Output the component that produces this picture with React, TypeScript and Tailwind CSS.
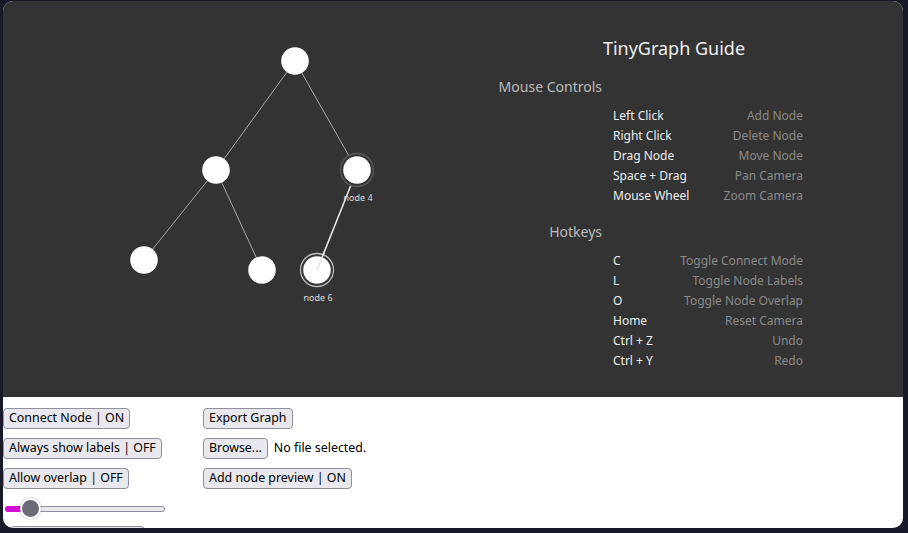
import React from 'react';

type Node = { id: number; x: number; y: number; label?: string; ring?: 'dim' | 'bright' };

const nodes: Node[] = [
  { id: 1, x: 292, y: 60 },
  { id: 2, x: 213, y: 169 },
  { id: 4, x: 354, y: 169, label: 'node 4', ring: 'dim' },
  { id: 3, x: 141, y: 259 },
  { id: 5, x: 259, y: 269 },
  { id: 6, x: 314, y: 269, label: 'node 6', ring: 'bright' },
];

const edges: [number, number, boolean?][] = [
  [1, 2],
  [1, 4],
  [2, 3],
  [2, 5],
  [4, 6, true],
];

const mouseControls = [
  ['Left Click', 'Add Node'],
  ['Right Click', 'Delete Node'],
  ['Drag Node', 'Move Node'],
  ['Space + Drag', 'Pan Camera'],
  ['Mouse Wheel', 'Zoom Camera'],
];

const hotkeys = [
  ['C', 'Toggle Connect Mode'],
  ['L', 'Toggle Node Labels'],
  ['O', 'Toggle Node Overlap'],
  ['Home', 'Reset Camera'],
  ['Ctrl + Z', 'Undo'],
  ['Ctrl + Y', 'Redo'],
];

function GraphCanvas() {
  const byId = (id: number) => nodes.find((n) => n.id === id)!;
  return (
    <svg width="487" height="396" className="shrink-0">
      {edges.map(([a, b, active]) => {
        const na = byId(a);
        const nb = byId(b);
        return (
          <line
            key={`${a}-${b}`}
            x1={na.x}
            y1={na.y}
            x2={nb.x}
            y2={nb.y}
            stroke={active ? '#e6e6e6' : '#a8a8a8'}
            strokeWidth={active ? 1.6 : 1}
          />
        );
      })}
      {nodes.map((n) => (
        <g key={n.id}>
          {n.ring && (
            <circle
              cx={n.x}
              cy={n.y}
              r={16.5}
              fill="#333333"
              stroke={n.ring === 'bright' ? '#bdbdbd' : '#5a5a5a'}
              strokeWidth={1.3}
            />
          )}
          <circle cx={n.x} cy={n.y} r={13.8} fill="#ffffff" />
          {n.label && (
            <text
              x={n.x + 1}
              y={n.y + 31}
              textAnchor="middle"
              fill="#dddddd"
              fontSize="9"
              fontFamily="'Noto Sans', sans-serif"
            >
              {n.label}
            </text>
          )}
        </g>
      ))}
      {/* the active edge sits on top of node 6's ring */}
      <line x1={354} y1={169} x2={314} y2={269} stroke="#e6e6e6" strokeWidth={1.6} strokeDasharray="0 88 20" />
    </svg>
  );
}

function GuideSection({ title, rows }: { title: string; rows: string[][] }) {
  return (
    <>
      <div className="mt-[17px] h-5 w-[112px] text-right text-[14px] leading-5 text-[#bcbcbc]">{title}</div>
      <div className="mt-2 ml-[123px] flex w-[190px] flex-col text-[12px] leading-5">
        {rows.map(([k, v]) => (
          <div key={k} className="flex h-5 justify-between pt-px">
            <span className="text-[#eeeeee]">{k}</span>
            <span className="text-[#8a8a8a]">{v}</span>
          </div>
        ))}
      </div>
    </>
  );
}

function Btn({ children }: { children: React.ReactNode }) {
  return (
    <button className="h-[21px] w-fit rounded-[4px] border border-[#8f8f9d] bg-[#e9e9ed] px-[5px] text-[12.4px] leading-none text-black">
      {children}
    </button>
  );
}

export default function App() {
  return (
    <div
      className="h-[533px] w-[908px] bg-[#181b27] pl-[3px] pt-px"
      style={{ fontFamily: "'Noto Sans', sans-serif" }}
    >
      <div className="flex h-[527px] w-[900px] flex-col overflow-hidden rounded-[10px] bg-white">
        {/* Canvas */}
        <div className="flex h-[396px] shrink-0 bg-[#333333]">
          <GraphCanvas />
          <div className="flex w-[368px] flex-col pt-[35px]">
            <div className="h-6 text-center text-[18px] leading-6 text-[#eeeeee]">TinyGraph Guide</div>
            <GuideSection title="Mouse Controls" rows={mouseControls} />
            <GuideSection title="Hotkeys" rows={hotkeys} />
          </div>
        </div>

        {/* Controls */}
        <div className="flex pt-[11px]">
          <div className="flex w-[200px] shrink-0 flex-col gap-[9px]">
            <Btn>Connect Node | ON</Btn>
            <Btn>Always show labels | OFF</Btn>
            <Btn>Allow overlap | OFF</Btn>
            <div className="relative flex h-[21px] items-center pl-[2px]">
              <div className="relative h-[6px] w-[160px] rounded-full border border-[#8f8f9d] bg-[#e9e9ed]">
                <div className="absolute -left-px -top-px h-[6px] w-[22px] rounded-l-full bg-[#d60fd6]" />
              </div>
              <div className="absolute left-[17px] top-0 h-[21px] w-[21px] rounded-full border-[2px] border-white bg-[#6b6b78] shadow-[0_0_2px_rgba(0,0,0,0.35)]" />
            </div>
            <button className="-mt-[2px] ml-[7px] h-[21px] w-[135px] shrink-0 rounded-[4px] border border-[#8f8f9d] bg-[#e9e9ed]" />
          </div>
          <div className="flex flex-col gap-[9px]">
            <Btn>Export Graph</Btn>
            <div className="flex items-center gap-[6px]">
              <Btn>Browse...</Btn>
              <span className="text-[12.4px] text-black">No file selected.</span>
            </div>
            <Btn>Add node preview | ON</Btn>
          </div>
        </div>
      </div>
    </div>
  );
}
